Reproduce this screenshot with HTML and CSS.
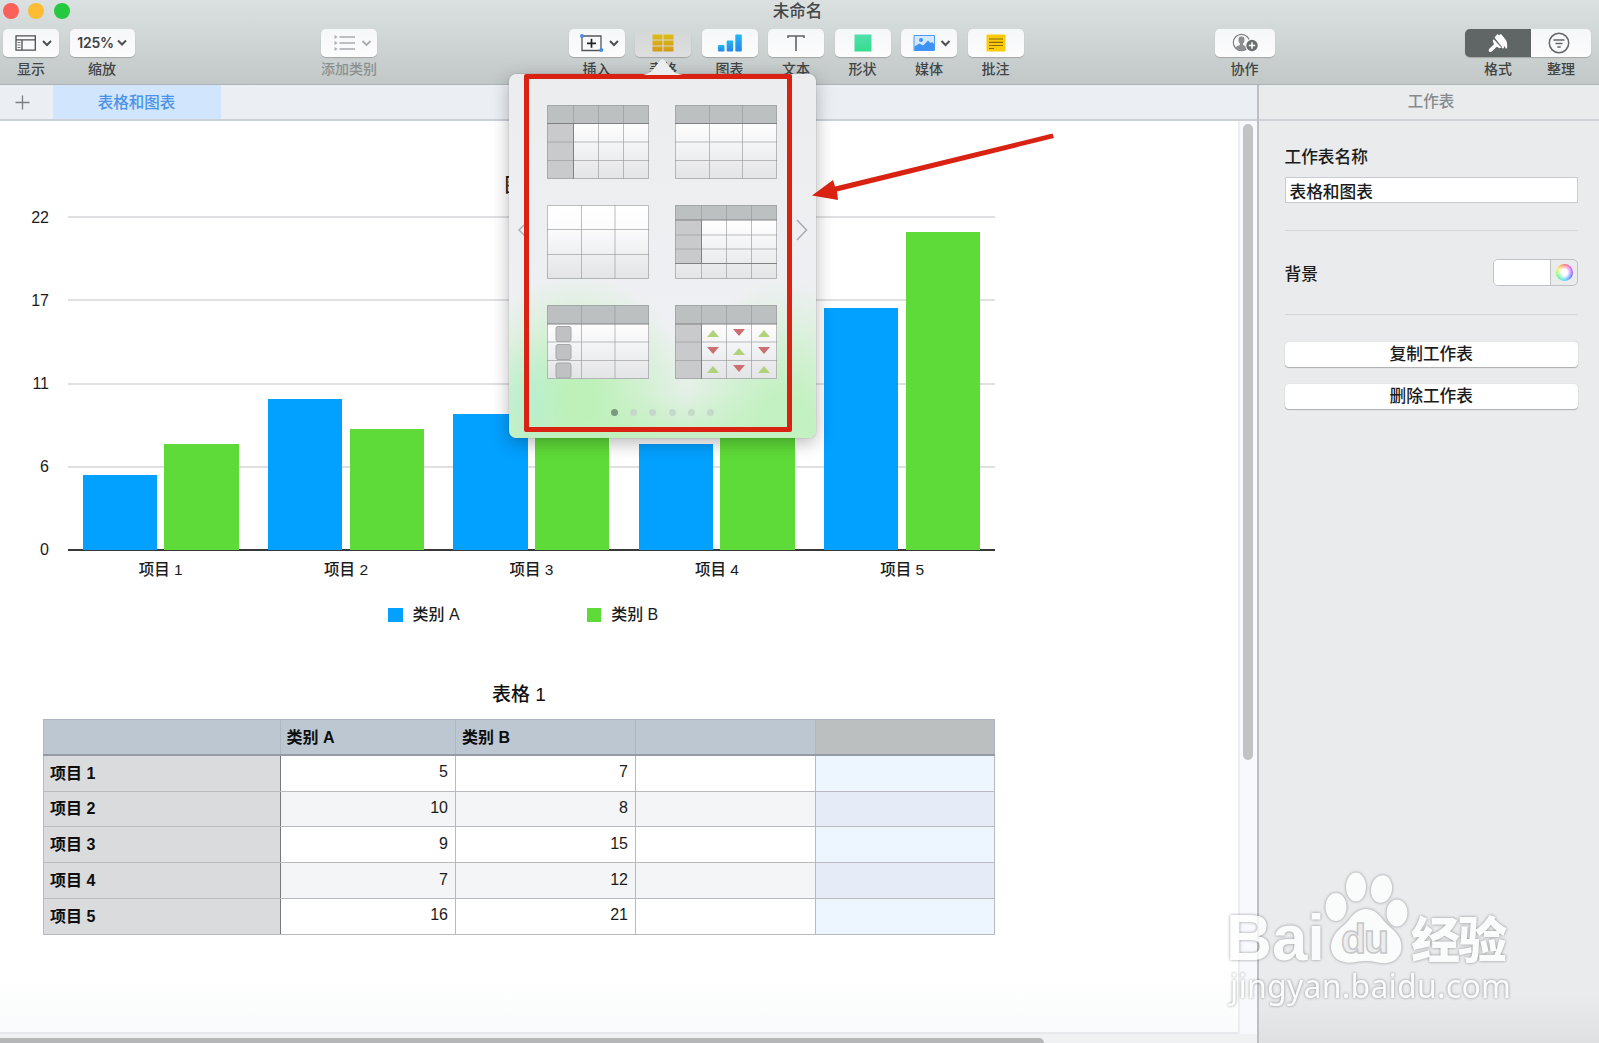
FILE: index.html
```html
<!DOCTYPE html>
<html lang="zh-CN">
<head>
	<meta charset="UTF-8">
	<meta name="viewport" content="width=device-width, initial-scale=1">
	<title>未命名</title>
	<link rel="stylesheet" href="styles.css">
</head>
<body>
	<header class="toolbar">
		<div class="titlebar">
			<div class="lights">
				<span class="light light--close"></span>
				<span class="light light--min"></span>
				<span class="light light--max"></span>
			</div>
			<h1 class="title">未命名</h1>
		</div>
		<div class="tools">
			<div class="tools__group tools__group--view">
				<div class="tool">
					<button class="button">
						<svg width="50" height="28" fill="none" stroke="#4c4f51" stroke-width="1.3"><path d="M10 6.800h19.300v14.400H10zM10 10.900h19.300M16 11v10"/><path d="M11.500 13.500h3M11.500 16h3M11.500 18.500h3" stroke-width=".8"/><path d="M37 12l4 4 4-4" stroke-width="2"/></svg>
					</button>
					<span class="tool__label">显示</span>
				</div>
				<div class="tool">
					<button class="button button--zoom">125%<svg width="10" height="7" fill="none" stroke="#4c4f51" stroke-width="2"><path d="M1 1.500l4 4 4-4"/></svg></button>
					<span class="tool__label">缩放</span>
				</div>
			</div>
			<div class="tools__group tools__group--category">
				<div class="tool tool--off">
					<button class="button">
						<svg width="50" height="28" fill="none" stroke="#a9abad" stroke-width="1.300"><path d="M15.500 8H31M15.500 14H31M15.500 20H31"/><path d="M10.500 6l3 2-3 2zM10.500 12l3 2-3 2zM10.500 18l3 2-3 2z" fill="#a9abad" stroke="none"/><path d="M38.500 12l4 4 4-4" stroke-width="1.800"/></svg>
					</button>
					<span class="tool__label">添加类别</span>
				</div>
			</div>
			<div class="tools__group tools__group--insert">
				<div class="tool">
					<button class="button">
						<svg width="50" height="28" fill="none"><path d="M10 7h19v14.500H10z" stroke="#55585a" stroke-width="1.300"/><path d="M19.500 9.800v9M15 14.300h9" stroke="#222" stroke-width="1.700"/><circle cx="10" cy="7" r="2" fill="#3f8ff0"/><circle cx="29.300" cy="21" r="2" fill="#3f8ff0"/><path d="M38 12l4 4 4-4" stroke="#4c4f51" stroke-width="2"/></svg>
					</button>
					<span class="tool__label">插入</span>
				</div>
				<div class="tool">
					<button class="button button--active">
						<svg width="22" height="18"><defs><linearGradient id="gold" x2="0" y2="1"><stop stop-color="#dcbc14"/><stop offset="1" stop-color="#d49a1c"/></linearGradient></defs><path d="M.5.500h10v5H.5zM11.500.500h10v5h-10zM.5 6.500h10v5H.5zM11.500 6.500h10v5h-10zM.5 12.500h10v5H.5zM11.500 12.500h10v5h-10z" fill="url(#gold)"/></svg>
					</button>
					<span class="tool__label">表格</span>
				</div>
				<div class="tool">
					<button class="button">
						<svg width="24" height="18"><defs><linearGradient id="blue" x2="0" y2="1"><stop stop-color="#21b8f5"/><stop offset="1" stop-color="#2586e8"/></linearGradient></defs><rect y="11" width="6.500" height="6.500" rx="1" fill="url(#blue)"/><rect x="8.700" y="6.500" width="6.500" height="11" rx="1" fill="url(#blue)"/><rect x="17.300" y=".5" width="6.500" height="17" rx="1" fill="url(#blue)"/></svg>
					</button>
					<span class="tool__label">图表</span>
				</div>
				<div class="tool">
					<button class="button">
						<svg width="18" height="18" fill="none" stroke="#606365" stroke-width="1.600"><path d="M1 4V2h16v2M9 2v15"/></svg>
					</button>
					<span class="tool__label">文本</span>
				</div>
				<div class="tool">
					<button class="button">
						<svg width="18" height="18"><defs><linearGradient id="green" x2="0" y2="1"><stop stop-color="#4fe0ac"/><stop offset="1" stop-color="#36dc8d"/></linearGradient></defs><rect x=".5" y=".5" width="17" height="17" fill="url(#green)"/></svg>
					</button>
					<span class="tool__label">形状</span>
				</div>
				<div class="tool">
					<button class="button">
						<svg width="50" height="28" fill="none"><path d="M10 6.500h20.500v15H10z" fill="#d4e7fd" stroke="#4a9bf5"/><path d="M10.500 17.500l5-3 3.500 2 5-5 2.500 2.500 1.500-1 2 2v6.500H10.500z" fill="#3e93f4"/><circle cx="17" cy="11" r="2" fill="#3e93f4"/><path d="M37.500 12l4 4 4-4" stroke="#4c4f51" stroke-width="2"/></svg>
					</button>
					<span class="tool__label">媒体</span>
				</div>
				<div class="tool">
					<button class="button">
						<svg width="20" height="18"><rect x=".5" y=".5" width="19" height="17" rx="1" fill="#fccb0a"/><path d="M3 5h14M3 8.300h14M3 11.500h14M3 14.500h5" stroke="#8a6a12" stroke-width="1.200"/></svg>
					</button>
					<span class="tool__label">批注</span>
				</div>
			</div>
			<div class="tools__group tools__group--share">
				<div class="tool tool--wide">
					<button class="button">
						<svg width="28" height="20"><circle cx="10.500" cy="9.500" r="8.200" fill="none" stroke="#7d8082" stroke-width="1.200"/><path d="M10.500 3.500c-2.500 0-3.200 1.700-3 3.700.1 1.600.7 2.500 1.400 3.200v1.600c-1.500.8-3.700 1.200-4.200 2.500 1.500 2 3.700 2.900 5.800 2.900s4.300-.9 5.800-2.900c-.5-1.300-2.700-1.700-4.200-2.500v-1.600c.7-.7 1.300-1.600 1.400-3.200.2-2-.5-3.700-3-3.700z" fill="#8c8f91"/><circle cx="21" cy="12.500" r="6.700" fill="#fafafa"/><circle cx="21" cy="12.500" r="5.700" fill="#6b6e70"/><path d="M21 9.300v6.400M17.800 12.500h6.400" stroke="#fff" stroke-width="1.600"/></svg>
					</button>
					<span class="tool__label">协作</span>
				</div>
			</div>
			<div class="tools__group tools__group--panels">
				<div class="tool tool--format">
					<button class="button button--on">
						<svg width="22" height="20" fill="#fff"><path d="M7.500 4.500l3-3.500L12 2.200 14 1l4.500 5.500c1.400 1.800 1.800 4 1.700 7.500 0 2-1.900 2-2 .3l-.5-1.300-.8 1.500c-.2 1.300-1.500 1.500-2 .3z"/><path d="M6.700 6.200l7.500 8.300-1.700.7-2.700-1.500L5 18.300c-2 1.800-4.500-.6-2.700-2.600L7 11.300 5.700 7.800z"/><path d="M7.200 5.200l7.500 8.500" stroke="#606665" stroke-width=".7"/></svg>
					</button>
					<span class="tool__label">格式</span>
				</div>
				<div class="tool tool--wide">
					<button class="button button--last">
						<svg width="22" height="22" fill="none" stroke="#626567" stroke-width="1.500"><circle cx="11" cy="11" r="9.700"/><path d="M5.500 8h11M7.500 11.500h7M9.300 15h3.400" stroke-width="1.700"/></svg>
					</button>
					<span class="tool__label">整理</span>
				</div>
			</div>
		</div>
	</header>

	<div class="workspace">
		<main class="document">
			<nav class="tabs">
				<button class="tabs__add"><svg width="15" height="15" stroke="#7b7f83" stroke-width="1.300"><path d="M7.500.500v14M.500 7.500h14"/></svg></button>
				<div class="tabs__tab">表格和图表</div>
			</nav>
			<div class="viewport">
				<div class="sheet">
					<section class="chart">
						<h2 class="chart__title">图表 1</h2>
						<div class="chart__body">
							<div class="chart__axis">
								<span>22</span><span>17</span><span>11</span><span>6</span><span>0</span>
							</div>
							<div class="chart__grid">
								<span></span><span></span><span></span><span></span>
							</div>
							<div class="chart__bars">
								<div class="pair"><i class="bar bar--a" style="height: 75.5px"></i><i class="bar bar--b" style="height: 106px"></i></div>
								<div class="pair"><i class="bar bar--a" style="height: 151.5px"></i><i class="bar bar--b" style="height: 121px"></i></div>
								<div class="pair"><i class="bar bar--a" style="height: 136px"></i><i class="bar bar--b" style="height: 227px"></i></div>
								<div class="pair"><i class="bar bar--a" style="height: 106px"></i><i class="bar bar--b" style="height: 182px"></i></div>
								<div class="pair"><i class="bar bar--a" style="height: 242px"></i><i class="bar bar--b" style="height: 318px"></i></div>
							</div>
						</div>
						<div class="chart__names">
							<span>项目 1</span><span>项目 2</span><span>项目 3</span><span>项目 4</span><span>项目 5</span>
						</div>
						<div class="legend">
							<span class="legend__item"><i class="legend__mark bar--a"></i>类别 A</span>
							<span class="legend__item"><i class="legend__mark bar--b"></i>类别 B</span>
						</div>
					</section>

					<table class="table">
						<caption>表格 1</caption>
						<colgroup><col class="col-name"><col class="col-a"><col class="col-b"><col class="col-c"><col class="col-d"></colgroup>
						<thead>
							<tr><th></th><th>类别 A</th><th>类别 B</th><th></th><th></th></tr>
						</thead>
						<tbody>
							<tr><th>项目 1</th><td>5</td><td>7</td><td></td><td></td></tr>
							<tr><th>项目 2</th><td>10</td><td>8</td><td></td><td></td></tr>
							<tr><th>项目 3</th><td>9</td><td>15</td><td></td><td></td></tr>
							<tr><th>项目 4</th><td>7</td><td>12</td><td></td><td></td></tr>
							<tr><th>项目 5</th><td>16</td><td>21</td><td></td><td></td></tr>
						</tbody>
					</table>
				</div>
				<div class="scroll-y"><div class="scroll-y__thumb"></div></div>
				<div class="scroll-x"><div class="scroll-x__thumb"></div></div>
			</div>
		</main>

		<aside class="inspector">
			<h2 class="inspector__title">工作表</h2>
			<div class="inspector__body">
				<label class="inspector__label" for="sheet-name">工作表名称</label>
				<input class="inspector__input" id="sheet-name" type="text" value="表格和图表">
				<div class="inspector__row">
					<span>背景</span>
					<div class="well"><span class="well__color"></span><span class="well__wheel"><i></i></span></div>
				</div>
				<button class="inspector__button">复制工作表</button>
				<button class="inspector__button">删除工作表</button>
			</div>
		</aside>
	</div>

	<!-- table style picker -->
	<div class="popover">
		<svg class="popover__tip" width="40" height="17"><path d="M0 17c8-1 12-8 16-13 2-3 4-4 6-1 5 6 8 13 18 14z" fill="#ecedef"/></svg>
		<svg class="popover__prev" width="12" height="20" fill="none" stroke="#a9abad" stroke-width="1.400"><path d="M11 1L2 10l9 9"/></svg>
		<div class="popover__frame">
			<div class="styles">
				<svg class="thumb" viewBox="0 0 102 74">
					<defs><linearGradient id="paper" x2="0" y2="1"><stop stop-color="#fff"/><stop offset=".3" stop-color="#fcfcfd"/><stop offset="1" stop-color="#e3e4e6"/></linearGradient></defs>
					<rect class="thumb__body" width="102" height="74"/>
					<path class="thumb__head" d="M0 0h102v18.500H0z"/>
					<path class="thumb__side" d="M0 18.500h26V74H0z"/>
					<path class="thumb__line" d="M26.500 0v74M51.500 0v74M76.500 0v74M0 37h102M0 55.500h102M.5.500h101v73H.5z"/>
					<path class="thumb__edge" d="M0 18.500h102M26.500 18.500V74"/>
				</svg>
				<svg class="thumb" viewBox="0 0 102 74">
					<rect class="thumb__body" width="102" height="74"/>
					<path class="thumb__head" d="M0 0h102v18.500H0z"/>
					<path class="thumb__line" d="M34.500 0v74M67.500 0v74M0 37h102M0 55.500h102M.5.500h101v73H.5z"/>
					<path class="thumb__edge" d="M0 18.500h102"/>
				</svg>
				<svg class="thumb" viewBox="0 0 102 74">
					<rect class="thumb__body" width="102" height="74"/>
					<path class="thumb__line" d="M34.500 0v74M68 0v74M0 24.500h102M0 49.500h102M.5.500h101v73H.5z"/>
				</svg>
				<svg class="thumb" viewBox="0 0 102 74">
					<rect class="thumb__body" width="102" height="74"/>
					<path class="thumb__head" d="M0 0h102v15H0z"/>
					<path class="thumb__side" d="M0 15h26v43.500H0z"/>
					<path class="thumb__line" d="M26.500 0v74M51.500 0v74M76.500 0v74M0 30h102M0 44h102M.5.500h101v73H.5z"/>
					<path class="thumb__edge" d="M0 15h102M26.500 15v43.500M0 58.500h102"/>
				</svg>
				<svg class="thumb" viewBox="0 0 102 74">
					<rect class="thumb__body" width="102" height="74"/>
					<path class="thumb__head" d="M0 0h102v19H0z"/>
					<path class="thumb__line" d="M34.500 0v74M68 0v74M0 37h102M0 55.500h102M.5.500h101v73H.5z"/>
					<path class="thumb__edge" d="M0 19h102"/>
					<g class="thumb__check"><rect x="9" y="21.500" width="15" height="15" rx="2"/><rect x="9" y="39.500" width="15" height="15" rx="2"/><rect x="9" y="58" width="15" height="15" rx="2"/></g>
				</svg>
				<svg class="thumb" viewBox="0 0 102 74">
					<rect class="thumb__body" width="102" height="74"/>
					<path class="thumb__head" d="M0 0h102v19H0z"/>
					<path class="thumb__side" d="M0 19h26v55H0z"/>
					<path class="thumb__line" d="M26.500 0v74M51.500 0v74M76.500 0v74M0 37h102M0 55.500h102M.5.500h101v73H.5z"/>
					<path class="thumb__edge" d="M0 19h102M26.500 19V74"/>
					<path class="thumb__up" d="M32 32h12l-6-7zM83 32h12l-6-7zM58 50h12l-6-7zM32 68h12l-6-7zM83 68h12l-6-7z"/>
					<path class="thumb__down" d="M58 24h12l-6 7zM32 42h12l-6 7zM83 42h12l-6 7zM58 60h12l-6 7z"/>
				</svg>
			</div>
			<div class="dots"><i></i><i></i><i></i><i></i><i></i><i></i></div>
		</div>
		<svg class="popover__next" width="12" height="22" fill="none" stroke="#a9abad" stroke-width="1.500"><path d="M1 1l9.500 10L1 21"/></svg>
	</div>

	<svg class="arrow" width="246" height="70" fill="#d92212"><path d="M240.500 3.500L242 8 25 61.500l1 8.500L0 65.500 21 50l2 6.500z"/></svg>

	<svg class="watermark" width="300" height="150">
		<g class="watermark__ink">
			<text class="watermark__bai" x="1" y="98" textLength="99" lengthAdjust="spacingAndGlyphs">Bai</text>
			<ellipse cx="111" cy="45" rx="10.500" ry="14"/>
			<ellipse cx="131" cy="25" rx="10" ry="14.500"/>
			<ellipse cx="156.500" cy="27" rx="10.500" ry="14" transform="rotate(10 156 27)"/>
			<ellipse cx="172" cy="51" rx="10.500" ry="13.500"/>
			<path d="M141 47c8 0 13 5 18 12 5 6 11 9 15 16 6 12 1 24-12 26-8 1-13-2-21-2s-15 3-22 1c-13-3-16-15-10-26 4-7 10-10 14-15 5-7 10-12 18-12z"/>
			<text class="watermark__cjk" x="186" y="96" textLength="96">经验</text>
			<text class="watermark__url" x="5" y="136" textLength="281">jingyan.baidu.com</text>
		</g>
		<text class="watermark__du" x="116" y="91" textLength="48">du</text>
	</svg>
</body>
</html>
```
FILE: styles.css
```css
* { box-sizing: border-box; }

body {
	font-family: "Liberation Sans", "Noto Sans CJK SC", sans-serif;
	font-size: 16px;
	font-weight: 500;
	color: #1b1b1c;
	margin: 0px;
	height: 1043px;
	position: relative;
	overflow: hidden;
	display: flex;
	flex-direction: column;
}

h1, h2 { margin: 0; font-weight: inherit; }
button, input { font: inherit; color: inherit; padding: 0; border: none; }
svg { display: block; }

/* toolbar */
.toolbar {
	height: 85px;
	flex: none;
	background: linear-gradient(#dbe1e0, #c2c8c7);
	border-bottom: 1px solid #aeb3b6;
}
.titlebar {
	display: grid;
	grid-template-columns: 1fr auto 1fr;
	height: 19px;
	align-items: center;
}
.lights {
	display: flex;
	gap: 9.5px;
	padding-left: 2.5px;
}
.light {
	width: 16px;
	height: 16px;
	border-radius: 50%;
}
.light--close { background: #fc605b; }
.light--min { background: #fdbc32; }
.light--max { background: #25c93f; }
.title {
	font-size: 16.5px;
	line-height: 20px;
	color: #434748;
	margin-left: -4px;
	padding-top: 1px;
}

.tools {
	display: flex;
	padding: 9.5px 8px 0 3px;
}
.tools__group { display: flex; gap: 10.5px; }
.tools__group--category { margin-left: 186.5px; }
.tools__group--insert { margin-left: 191.5px; }
.tools__group--share { margin-left: 191px; }
.tools__group--panels { margin-left: auto; gap: 0; }

.tool {
	display: flex;
	flex-direction: column;
	align-items: center;
	min-width: 56px;
}
.tool__label {
	font-size: 14px;
	line-height: 20px;
	margin-top: 2.5px;
	color: #414546;
}
.tool--off .tool__label { color: #8b9091; }
.tool--wide { width: 60px; }
.tool--format { width: 66px; }

.button {
	display: flex;
	align-items: center;
	justify-content: center;
	width: 100%;
	height: 28px;
	border-radius: 5px;
	background: linear-gradient(#f6f7f8, #fcfcfd);
	box-shadow: 0 1px 1px rgba(0, 0, 0, 0.2);
}
.button svg { flex: none; }
.button--zoom {
	width: 65px;
	gap: 3px;
	font: 600 14px Inter, sans-serif;
	letter-spacing: -0.3px;
	color: #3f4244;
}
.button--active { background: linear-gradient(#d5d7d7, #dddedf); }
.button--on { background: #606665; border-radius: 5px 0 0 5px; }
.button--last { border-radius: 0 5px 5px 0; padding-right: 4px; }

/* document */
.workspace {
	flex: 1;
	display: flex;
	min-height: 0;
}
.document {
	width: 1257px;
	display: flex;
	flex-direction: column;
}
.tabs {
	display: flex;
	height: 36px;
	flex: none;
	background: #ebeff4;
	border-bottom: 2px solid #ccd1d8;
}
.tabs__add {
	width: 53px;
	padding-right: 8px;
	display: flex;
	align-items: center;
	justify-content: center;
	background: none;
}
.tabs__tab {
	width: 168px;
	background: #d1e5fd;
	color: #4a93e8;
	font-size: 15.5px;
	line-height: 35px;
	padding-right: 1px;
	text-align: center;
}
.viewport {
	flex: 1;
	display: grid;
	grid-template-columns: 1240px 1fr;
	grid-template-rows: 913px 1fr;
}
.sheet {
	padding: 51px 0 0 43px;
	background: linear-gradient(#fff 94%, #f9fafb);
	border-right: 2px solid #eceef1;
	border-bottom: 2px solid #e6e8eb;
}
.scroll-y {
	background: #f8f9fc;
	padding: 3px 3px 0;
}
.scroll-y__thumb {
	width: 10px;
	height: 636px;
	border-radius: 5px;
	background: #c1c2c4;
}
.scroll-x {
	grid-column: 1 / 3;
	background: #f0f1f3;
	padding-top: 4px;
}
.scroll-x__thumb {
	width: 1044px;
	height: 10px;
	border-radius: 0 5px 0 0;
	background: #b4b6b8;
}

/* chart */
.chart__title {
	font-size: 19px;
	line-height: 28px;
	width: 977px;
	text-align: center;
}
.chart__body {
	display: grid;
	grid-template-columns: 25px 927px;
	grid-template-rows: 335px;
	margin-top: 16px;
}
.chart__axis {
	display: flex;
	flex-direction: column;
	justify-content: space-between;
	margin: -9px 19px -10px -20px;
	text-align: right;
	line-height: 22px;
}
.chart__grid {
	grid-area: 1 / 2;
	display: grid;
	grid-template-rows: repeat(4, 1fr);
	border-bottom: 2px solid #38383a;
}
.chart__grid span { border-top: 2px solid #e0e0e2; }
.chart__bars {
	grid-area: 1 / 2;
	display: flex;
	align-items: flex-end;
	padding-bottom: 1px;
}
.pair {
	width: 185.4px;
	flex: none;
	display: flex;
	align-items: flex-end;
	gap: 7.5px;
	padding-left: 14.5px;
}
.bar { width: 74.3px; }
.bar--a { background: #02a0ff; }
.bar--b { background: #5edb38; }
.chart__names {
	display: flex;
	margin: 8px 0 0 25px;
	font-size: 15.5px;
	line-height: 22px;
}
.chart__names span { width: 185.4px; text-align: center; }
.legend {
	display: flex;
	gap: 127px;
	margin: 23px 0 0 345px;
	line-height: 22px;
}
.legend__item { display: flex; align-items: center; gap: 10px; }
.legend__mark { width: 14.5px; height: 14.5px; }

/* data table */
.table {
	width: 952px;
	margin-top: 55px;
	border-collapse: collapse;
	table-layout: fixed;
	line-height: 22px;
}
.table caption { font-size: 19px; line-height: 28px; padding-bottom: 10px; color: #111; }
.col-name { width: 236.5px; }
.col-a { width: 175.5px; }
.col-b, .col-c { width: 180px; }
.table th, .table td {
	height: 35.8px;
	padding: 1px 6px 0;
	border: 1px solid #b9babd;
}
.table th { text-align: left; color: #0d0d0e; }
.table td { text-align: right; padding: 0 7px 2px; }
.table thead th { background: #bdc7d2; border-color: #aeb6bf; border-bottom: 2px solid #949ba4; }
.table thead th:last-child { background: #bbbfbf; }
.table tbody th { background: #dadbdd; border-right-color: #77787b; }
.table tbody tr:nth-child(even) td { background: #f3f5f7; }
.table tbody td:last-child { background: #edf5ff; }
.table tbody tr:nth-child(even) td:last-child { background: #e5ecf8; }

/* inspector */
.inspector {
	flex: 1;
	background: linear-gradient(#eaebed 95%, #dfe0e2);
	border-left: 2px solid #bcbfc3;
}
.inspector__title {
	height: 36px;
	border-bottom: 2px solid #cdd0d4;
	color: #858a8e;
	font-size: 15.5px;
	line-height: 34px;
	text-align: center;
	padding-left: 4px;
}
.inspector__body {
	padding: 26px 21px 0 25.5px;
	font-size: 16.7px;
	display: flex;
	flex-direction: column;
}
.inspector__label { line-height: 22px; }
.inspector__input {
	height: 26px;
	margin-top: 8px;
	padding: 1px 4px 0;
	border: 1px solid #c9cbce;
	background: #fff;
}
.inspector__row {
	height: 85px;
	margin: 27px 0 27px;
	display: flex;
	align-items: center;
	justify-content: space-between;
	border: 1px solid #d3d5d8;
	border-width: 1px 0;
}
.well {
	display: flex;
	width: 85px;
	height: 27px;
	border: 1px solid #bfc2c5;
	border-radius: 5px;
	overflow: hidden;
}
.well__color { flex: 1; background: #fff; border-right: 1px solid #bfc2c5; }
.well__wheel { width: 26px; display: flex; align-items: center; justify-content: center; }
.well__wheel i {
	width: 17px;
	height: 17px;
	border-radius: 50%;
	background: radial-gradient(#fff 25%, rgba(255, 255, 255, 0) 80%), conic-gradient(#f55, #c3f, #44f, #2cf, #3f5, #ee3, #f55);
}
.inspector__button {
	height: 25px;
	margin-bottom: 17px;
	border-radius: 4px;
	background: #fff;
	line-height: 25px;
	box-shadow: 0 1px 1px rgba(0, 0, 0, 0.25), 0 0 1px rgba(0, 0, 0, 0.2);
}

/* popover lies over toolbar and sheet */
.popover {
	position: absolute;
	left: 509px;
	top: 74px;
	width: 307px;
	height: 364px;
	display: flex;
	align-items: center;
	border-radius: 7px;
	background:
		radial-gradient(ellipse 40px 60px at 20px 325px, rgba(182, 238, 208, 0.8), rgba(182, 238, 208, 0)),
		radial-gradient(ellipse 115px 125px at 68px 325px, #bdf1b9 15%, rgba(189, 241, 185, 0)),
		radial-gradient(ellipse 105px 145px at 275px 350px, #c3f1c1 20%, rgba(195, 241, 193, 0)),
		linear-gradient(#ecedef, #eff0f3 70%, #e6f0e9 88%, #c6efc6);
	box-shadow: 0 5px 18px rgba(0, 0, 0, 0.28), 0 0 1px rgba(0, 0, 0, 0.5);
}
.popover__tip {
	position: absolute;
	left: 134px;
	top: -16px;
}
.popover__prev { flex: none; margin: 0 -5px 52px 8px; }
.popover__next { flex: none; margin: 0 0 52px 4px; }
.popover__frame {
	flex: none;
	align-self: flex-start;
	width: 268px;
	height: 358px;
	border: 5px solid #d92212;
	border-radius: 2px;
	padding: 26px 9px 0 18px;
}
.styles {
	display: grid;
	grid-template-columns: 102px 102px;
	gap: 26px;
	row-gap: 25.8px;
}
.thumb { width: 102px; height: 74px; }
.thumb__body { fill: url(#paper); }
.thumb__head { fill: #bdc0c0; }
.thumb__side { fill: #c9cacb; }
.thumb__line { fill: none; stroke: #97999b; stroke-opacity: 0.65; }
.thumb__edge { fill: none; stroke: #7f8183; }
.thumb__check { fill: #c0c1c2; stroke: #a5a6a8; }
.thumb__up { fill: #b0d27a; }
.thumb__down { fill: #cc6f72; }
.dots {
	display: flex;
	gap: 12.2px;
	margin: 30px 0 0 64px;
}
.dots i {
	width: 7px;
	height: 7px;
	border-radius: 50%;
	background: #c5d9c9;
}
.dots i:first-child { background: #7a9a7d; }

.arrow {
	position: absolute;
	left: 811.5px;
	top: 129.5px;
}

.watermark {
	position: absolute;
	left: 1225px;
	top: 862px;
}
.watermark__ink {
	fill: #fff;
	opacity: 0.8;
	filter: drop-shadow(0 0 1.5px rgba(0, 0, 0, 0.5));
}
.watermark__bai { font: bold 65px "Liberation Sans", sans-serif; }
.watermark__cjk { font: 900 49px "Noto Sans CJK SC", sans-serif; }
.watermark__url { font: 32px "Noto Sans", sans-serif; }
.watermark__du {
	font: bold 41px "Liberation Sans", sans-serif;
	fill: #ececed;
	stroke: #c6c7c9;
	stroke-width: 1.5;
}
```
